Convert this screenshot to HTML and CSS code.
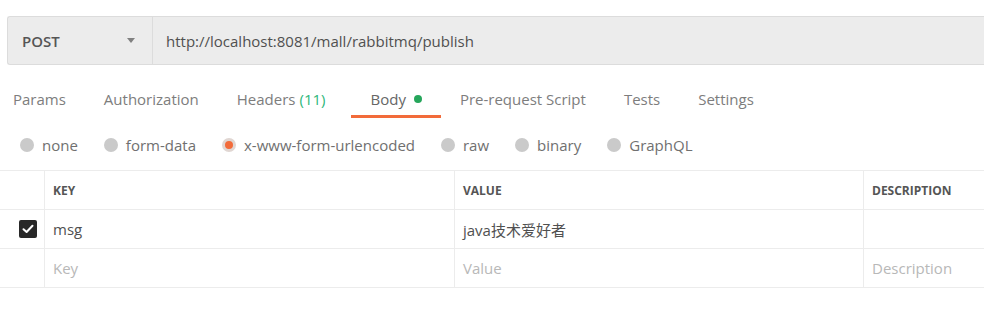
FILE: index.html
```html
<!DOCTYPE html>
<html lang="en">
<head>
  <meta charset="UTF-8" />
  <title>Request - publish</title>
  <link rel="stylesheet" href="styles.css">
</head>
<body>
  <div class="url-bar">
    <div class="method">
      <span>POST</span>
      <span class="caret"></span>
    </div>
    <div class="url">http://localhost:8081/mall/rabbitmq/publish</div>
  </div>

  <div class="tabs">
    <div class="tab">Params</div>
    <div class="tab">Authorization</div>
    <div class="tab headers">Headers <span class="count">(11)</span></div>
    <div class="tab active">Body <span class="dot"></span></div>
    <div class="tab">Pre-request Script</div>
    <div class="tab">Tests</div>
    <div class="tab">Settings</div>
  </div>

  <div class="body-types">
    <label class="radio"><span class="circle"></span>none</label>
    <label class="radio"><span class="circle"></span>form-data</label>
    <label class="radio checked"><span class="circle"></span>x-www-form-urlencoded</label>
    <label class="radio"><span class="circle"></span>raw</label>
    <label class="radio"><span class="circle"></span>binary</label>
    <label class="radio"><span class="circle"></span>GraphQL</label>
  </div>

  <div class="kv-table">
    <div class="cell"></div>
    <div class="cell head">Key</div>
    <div class="cell head">Value</div>
    <div class="cell head">Description</div>

    <div class="cell check-cell">
      <span class="checkbox">
        <svg width="12" height="10" viewBox="0 0 12 10"><path d="M1.5 5.2 L4.6 8 L10.5 1.8" fill="none" stroke="#fff" stroke-width="2" stroke-linecap="round" stroke-linejoin="round"/></svg>
      </span>
    </div>
    <div class="cell">msg</div>
    <div class="cell">java技术爱好者</div>
    <div class="cell"></div>

    <div class="cell"></div>
    <div class="cell placeholder">Key</div>
    <div class="cell placeholder">Value</div>
    <div class="cell placeholder">Description</div>
  </div>
</body>
</html>
```

FILE: styles.css
```css
html, body {
  margin: 0;
  padding: 0;
  background-color: #fff;
  font-family: "Open Sans", "Noto Sans CJK SC", sans-serif;
  font-size: 15px;
  color: #505050;
  overflow: hidden;
}

.url-bar {
  display: flex;
  height: 47px;
  margin: 16px 0 0 7px;
  background-color: #ececec;
  border: 1px solid #dcdcdc;
  border-right: none;
  border-radius: 3px 0 0 3px;
}

.method {
  width: 113px;
  padding: 0 17px 0 14px;
  display: flex;
  align-items: center;
  justify-content: space-between;
  border-right: 1px solid #dcdcdc;
  font-weight: 600;
  color: #555;
}

.caret {
  width: 0;
  height: 0;
  border-left: 4px solid transparent;
  border-right: 4px solid transparent;
  border-top: 5px solid #808080;
}

.url {
  display: flex;
  align-items: center;
  padding-left: 13px;
  color: #505050;
}

.tabs {
  display: flex;
  margin-top: 17px;
}

.tab {
  padding: 7px 19px 6px;
  line-height: 20px;
  color: #7d7d7d;
  border-bottom: 3px solid transparent;
  display: flex;
  align-items: center;
}

.tab:first-child {
  padding-left: 13px;
}

.tab.headers {
  padding-right: 26px;
}

.tab .count {
  color: #2db77a;
  margin-left: 4px;
}

.tab.active {
  color: #666;
  border-bottom-color: #f26b3a;
}

.tab .dot {
  width: 8px;
  height: 8px;
  border-radius: 50%;
  background-color: #26a65b;
  margin-left: 8px;
}

.body-types {
  display: flex;
  gap: 26px;
  padding: 17px 0 15px 20px;
}

.radio {
  display: flex;
  align-items: center;
  line-height: 20px;
  color: #707070;
}

.radio .circle {
  width: 14px;
  height: 14px;
  border-radius: 50%;
  background-color: #cacaca;
  margin-right: 8px;
  box-sizing: border-box;
}

.radio.checked .circle {
  background-color: #f26b3a;
  border: 3px solid #e0d6d2;
}

.kv-table {
  display: grid;
  grid-template-columns: 45px 410px 409px 1fr;
  border-top: 1px solid #ececec;
}

.cell {
  height: 38px;
  border-bottom: 1px solid #ececec;
  border-right: 1px solid #ececec;
  display: flex;
  align-items: center;
  padding-left: 8px;
  color: #505050;
  white-space: nowrap;
  overflow: hidden;
}

.cell:nth-child(4n) {
  border-right: none;
}

.cell:nth-child(4n+1) {
  padding-left: 0;
}

.cell.head {
  font-size: 12px;
  font-weight: 700;
  text-transform: uppercase;
  color: #555;
}

.cell.placeholder {
  color: #b8b8b8;
}

.check-cell {
  justify-content: flex-end;
}

.checkbox {
  width: 18px;
  height: 18px;
  margin-right: 7px;
  border-radius: 2px;
  background-color: #282828;
  display: flex;
  align-items: center;
  justify-content: center;
}
```
